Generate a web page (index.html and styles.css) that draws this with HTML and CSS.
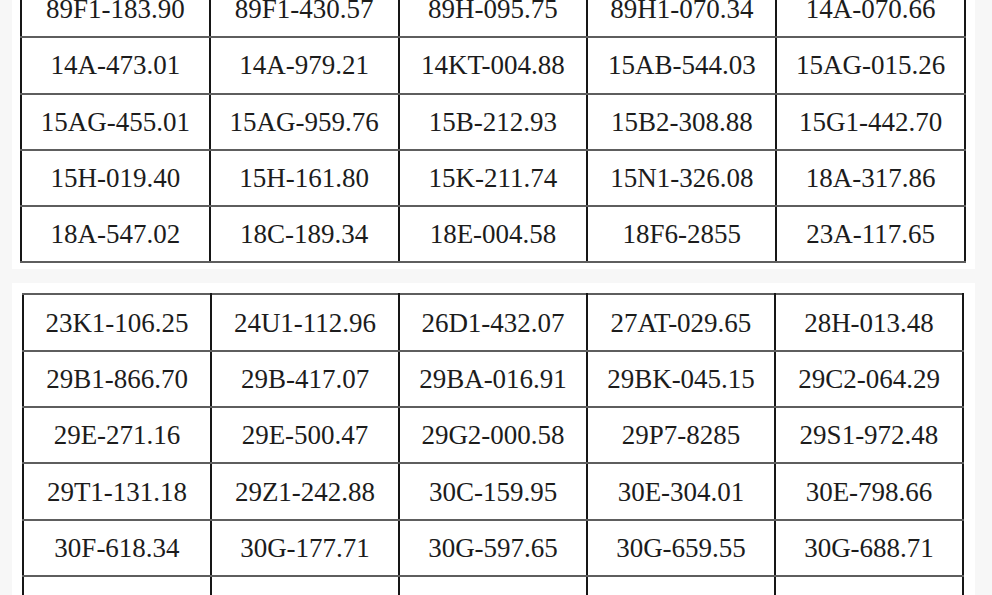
FILE: index.html
```html
<!DOCTYPE html>
<html lang="en">
<head>
<meta charset="utf-8">
<title>Codes</title>
<link rel="stylesheet" href="styles.css">
</head>
<body>
<div class="page">
  <section class="panel panel-first">
    <table class="grid">
      <tr><td>89F1-183.90</td><td>89F1-430.57</td><td>89H-095.75</td><td>89H1-070.34</td><td>14A-070.66</td></tr>
      <tr><td>14A-473.01</td><td>14A-979.21</td><td>14KT-004.88</td><td>15AB-544.03</td><td>15AG-015.26</td></tr>
      <tr><td>15AG-455.01</td><td>15AG-959.76</td><td>15B-212.93</td><td>15B2-308.88</td><td>15G1-442.70</td></tr>
      <tr><td>15H-019.40</td><td>15H-161.80</td><td>15K-211.74</td><td>15N1-326.08</td><td>18A-317.86</td></tr>
      <tr><td>18A-547.02</td><td>18C-189.34</td><td>18E-004.58</td><td>18F6-2855</td><td>23A-117.65</td></tr>
    </table>
  </section>
  <section class="panel panel-second">
    <table class="grid">
      <tr><td>23K1-106.25</td><td>24U1-112.96</td><td>26D1-432.07</td><td>27AT-029.65</td><td>28H-013.48</td></tr>
      <tr><td>29B1-866.70</td><td>29B-417.07</td><td>29BA-016.91</td><td>29BK-045.15</td><td>29C2-064.29</td></tr>
      <tr><td>29E-271.16</td><td>29E-500.47</td><td>29G2-000.58</td><td>29P7-8285</td><td>29S1-972.48</td></tr>
      <tr><td>29T1-131.18</td><td>29Z1-242.88</td><td>30C-159.95</td><td>30E-304.01</td><td>30E-798.66</td></tr>
      <tr><td>30F-618.34</td><td>30G-177.71</td><td>30G-597.65</td><td>30G-659.55</td><td>30G-688.71</td></tr>
      <tr><td>30G-848.80</td><td>30H-016.04</td><td>30K-777.06</td><td>30L-011.42</td><td>30M-141.29</td></tr>
    </table>
  </section>
</div>
</body>
</html>
```

FILE: styles.css
```css
html, body {
  margin: 0;
  padding: 0;
  background: #f7f7f7;
  overflow: hidden;
}

.page {
  margin-top: -31px;
  padding: 0 17px 0 12px;
  font-family: "Liberation Serif", "Times New Roman", serif;
  color: #1c1c1c;
}

.panel {
  background: #ffffff;
}

.panel-first {
  padding: 11px 9px 6px 8px;
}

.panel-second {
  margin-top: 14px;
  padding: 10px 11px 8px 10px;
}

.grid {
  width: 100%;
  table-layout: fixed;
  border-collapse: collapse;
  border: 2px solid #2a2a2a;
}

.grid td {
  height: 54.3px;
  padding: 0;
  text-align: center;
  vertical-align: middle;
  font-size: 27px;
  line-height: 30px;
  border-top: 2px solid #5e5e5e;
  border-bottom: 2px solid #5e5e5e;
  border-left: 2px solid #161616;
  border-right: 2px solid #161616;
  white-space: nowrap;
}
```
